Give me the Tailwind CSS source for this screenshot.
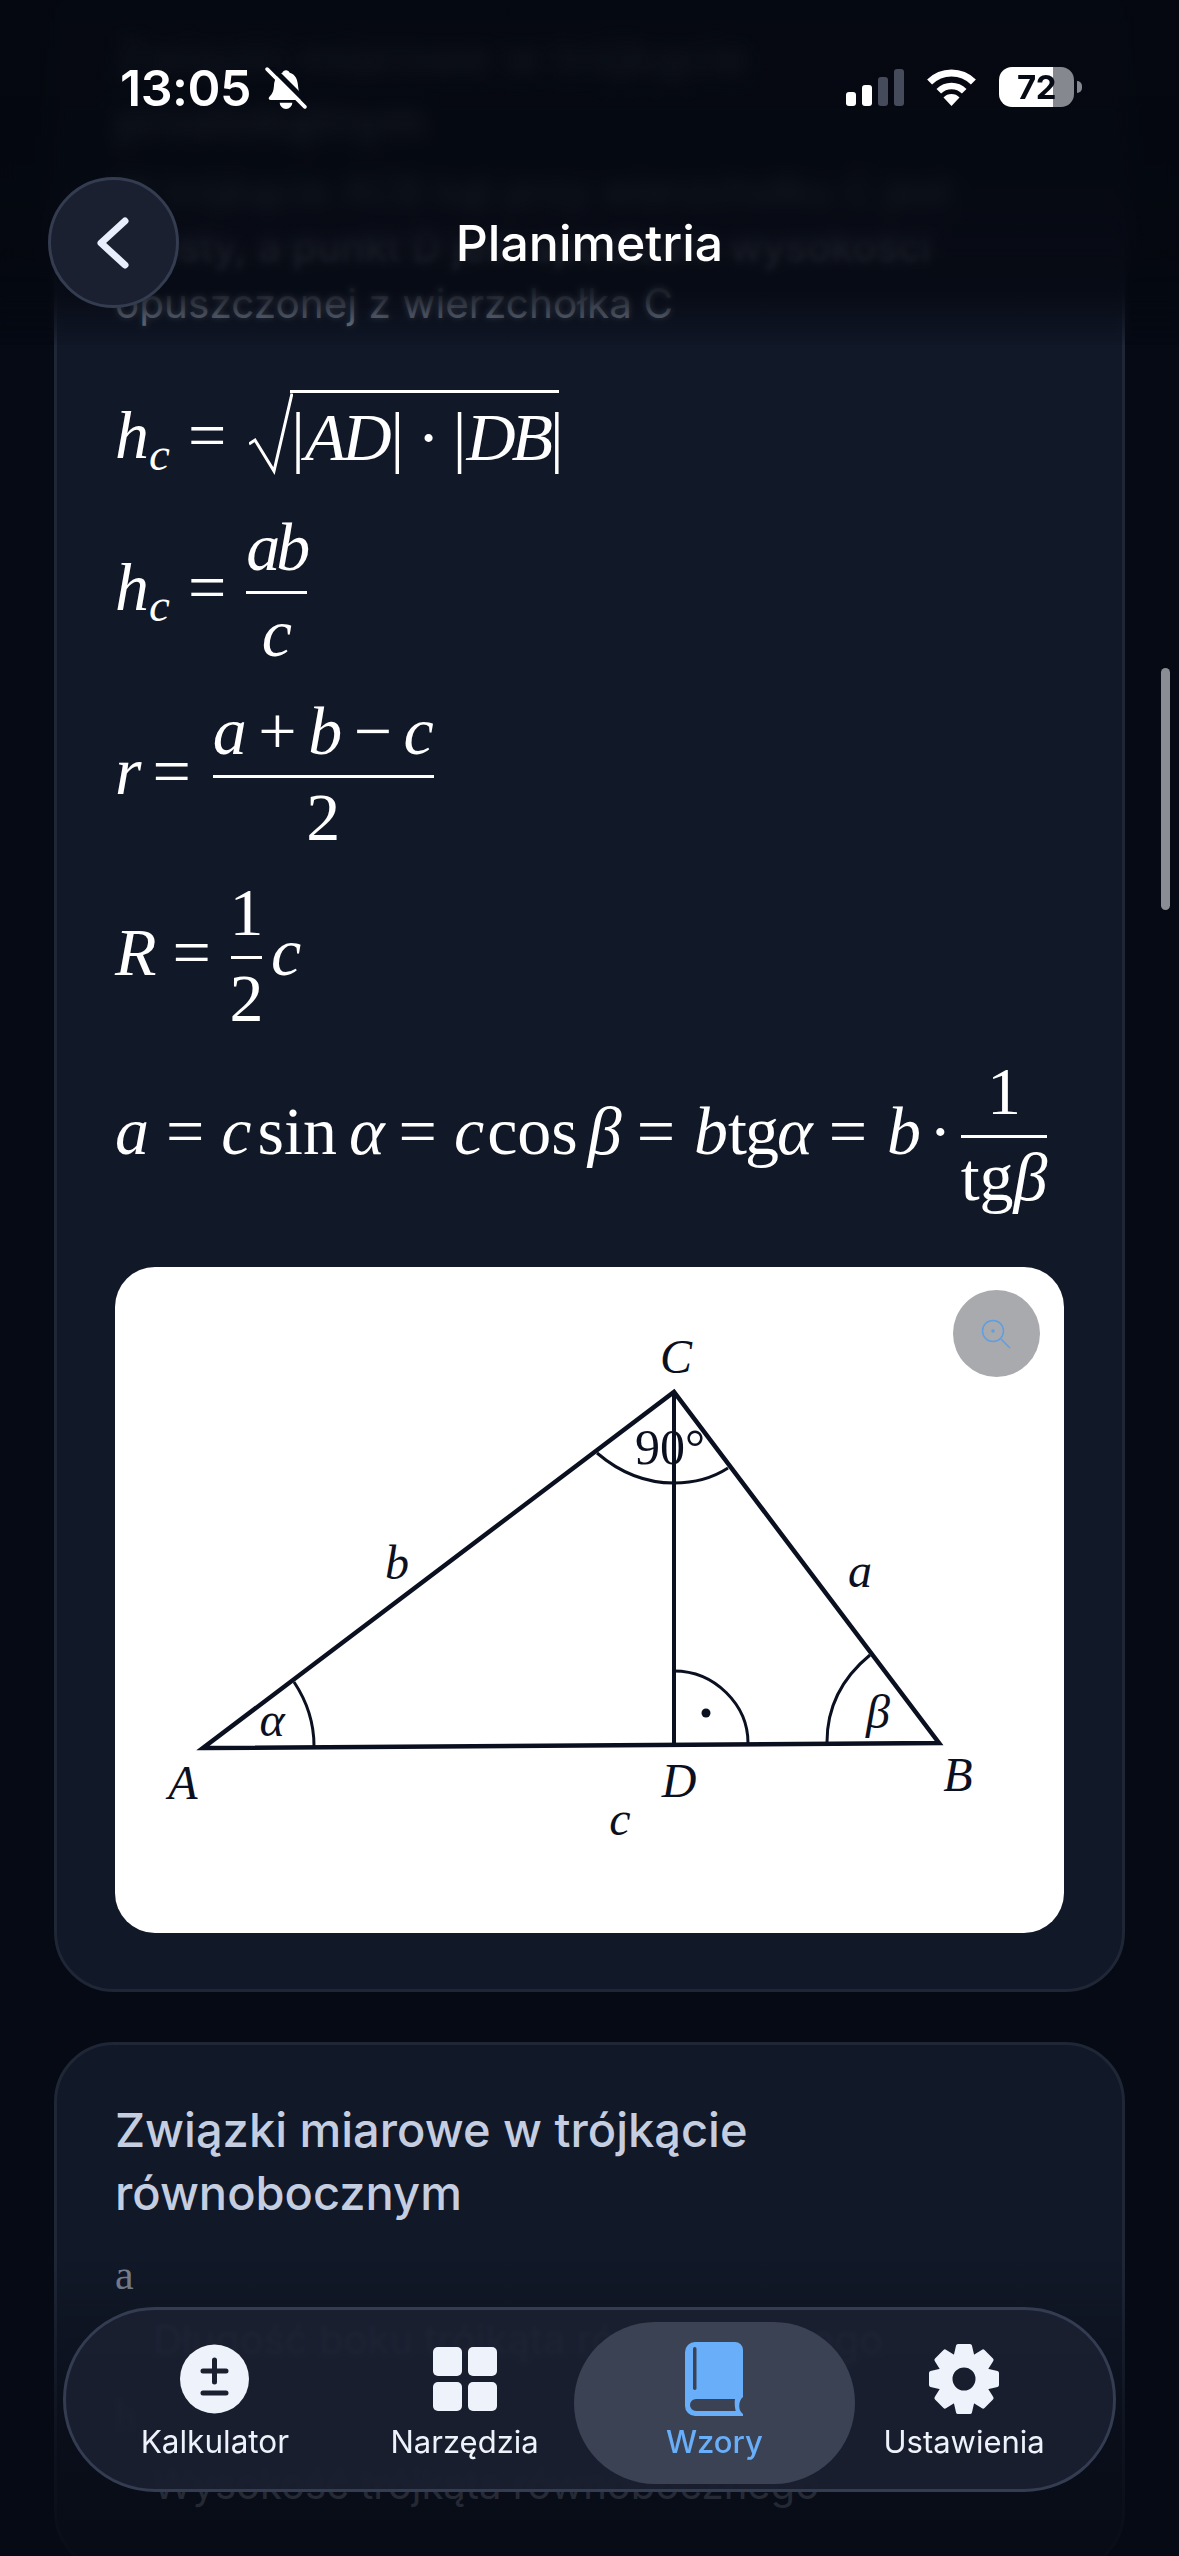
<!DOCTYPE html>
<html lang="pl">
<head>
  <meta charset="UTF-8">
  <meta name="viewport" content="width=device-width, initial-scale=1.0">
  <title>Planimetria</title>
  <script src="https://cdn.jsdelivr.net/npm/@tailwindcss/browser@4"></script>
</head>
<body class="bg-[#060a14] font-['Inter',sans-serif]">
  <div class="relative w-[1179px] h-[2556px] overflow-hidden">

    <!-- Scrolled content -->
    <main class="-mt-[31px] px-[54px] flex flex-col gap-[50px]">

      <!-- Card: right triangle -->
      <section class="bg-[#111827] border-[3px] border-[#1f2636] rounded-[60px] px-[58px] pt-[53px] pb-[56px]">
        <h2 class="text-[47px] leading-[63px] font-medium text-[#c5cde0]">Związki miarowe w trójkącie<br>prostokątnym</h2>
        <p class="mt-[10px] text-[40.500px] leading-[57px] text-[#9aa3b5]">W trójkącie ACB kąt przy wierzchołku C jest<br>prosty, a punkt D jest spodkiem wysokości<br>opuszczonej z wierzchołka C</p>

        <!-- Formulas -->
        <div class="font-['Liberation_Serif',serif] text-[68px] text-white">
          <div class="mt-[58px] h-[90px] flex items-center leading-[80px]">
            <span class="italic">h<sub class="text-[47px]">c</sub></span>
            <span class="ml-[18px]">=</span>
            <svg class="ml-[23px] w-[44px] h-[90px] shrink-0" viewBox="0 0 44 90" fill="none" stroke="#fff"><path d="M0 54 L6 50 L25 81 L43 3.500" stroke-width="3"/></svg>
            <div class="-ml-[3px] border-t-[3px] border-white h-[90px] w-[269px] flex items-center leading-[84px] font-light">
              <span class="ml-[1px]">|</span><span class="italic tracking-[-4px]">AD</span><span class="ml-[3px]">|</span><span class="mx-[13px]">·</span><span>|</span><span class="italic tracking-[-4px]">DB</span><span class="ml-[1px]">|</span>
            </div>
          </div>

          <div class="mt-[26px] h-[161px] flex items-center leading-[80px]">
            <span class="italic">h<sub class="text-[47px]">c</sub></span>
            <span class="ml-[18px] mr-[20px]">=</span>
            <div class="mt-[12px] flex flex-col items-center">
              <div class="h-[79px] leading-[70px] italic tracking-[-4px] pr-[1px]">ab</div>
              <div class="h-[3px] w-full bg-white"></div>
              <div class="h-[79px] leading-[78px] italic">c</div>
            </div>
          </div>

          <div class="mt-[23px] h-[161px] flex items-center leading-[80px]">
            <span class="italic">r</span>
            <span class="ml-[11px] mr-[22px]">=</span>
            <div class="mt-[12px] flex flex-col items-center">
              <div class="h-[79px] leading-[70px] flex">
                <span class="italic">a</span><span class="mx-[11.500px]">+</span><span class="italic">b</span><span class="mx-[11.500px]">−</span><span class="italic">c</span>
              </div>
              <div class="h-[3px] w-full bg-white"></div>
              <div class="h-[79px] leading-[78px]">2</div>
            </div>
          </div>

          <div class="mt-[20px] h-[161px] flex items-center leading-[80px]">
            <span class="italic">R</span>
            <span class="ml-[16px] mr-[20px]">=</span>
            <div class="mt-[12px] w-[31px] flex flex-col items-center">
              <div class="h-[79px] leading-[70px]">1</div>
              <div class="h-[3px] w-full bg-white"></div>
              <div class="h-[79px] leading-[78px]">2</div>
            </div>
            <span class="italic ml-[9px]">c</span>
          </div>

          <div class="mt-[18px] h-[161px] flex items-center leading-[80px]">
            <span class="italic">a</span>
            <span class="ml-[17px]">=</span>
            <span class="italic ml-[17px]">c</span>
            <span class="ml-[6px]">sin</span>
            <span class="italic ml-[12px]">α</span>
            <span class="ml-[14px]">=</span>
            <span class="italic ml-[17px]">c</span>
            <span class="ml-[3px]">cos</span>
            <span class="italic ml-[10px]">β</span>
            <span class="ml-[15px]">=</span>
            <span class="italic ml-[19px]">b</span>
            <span class="tracking-[-2px]">tg</span>
            <span class="italic">α</span>
            <span class="ml-[16px]">=</span>
            <span class="italic ml-[20px]">b</span>
            <span class="ml-[8px]">·</span>
            <div class="ml-[9px] mt-[12px] flex flex-col items-center">
              <div class="h-[79px] leading-[70px]">1</div>
              <div class="h-[3px] w-full bg-white"></div>
              <div class="h-[79px] leading-[78px] whitespace-nowrap">tg<span class="italic">β</span></div>
            </div>
          </div>
        </div>

        <!-- Triangle picture -->
        <div class="relative mt-[56px] h-[666px] bg-white rounded-[40px] overflow-hidden">
          <svg class="w-full h-full font-['Liberation_Serif',serif] italic" viewBox="115 1267 949 666" fill="none" stroke="#0b1020">
            <path d="M203 1748 L939 1743 L674 1392 Z" stroke-width="4.500" stroke-linejoin="miter"/>
            <path d="M674 1392 V1745" stroke-width="4"/>
            <path d="M294 1682 Q314 1712 314 1746" stroke-width="3"/>
            <path d="M597 1453 Q632 1483 674 1483 Q705 1483 728 1468" stroke-width="3"/>
            <path d="M674 1671 C715 1671 748 1705 748 1743" stroke-width="3"/>
            <path d="M870 1655 C842 1678 827 1708 827 1742" stroke-width="3"/>
            <circle cx="706" cy="1713" r="4.500" fill="#0b1020" stroke="none"/>
            <g fill="#0b1020" stroke="none" font-size="48" text-anchor="middle">
              <text x="676" y="1373">C</text>
              <text x="397" y="1579">b</text>
              <text x="860" y="1587">a</text>
              <text x="272" y="1736">α</text>
              <text x="878" y="1728">β</text>
              <text x="183" y="1799">A</text>
              <text x="679" y="1797">D</text>
              <text x="958" y="1791">B</text>
              <text x="620" y="1835">c</text>
              <text x="670" y="1464" font-style="normal" font-size="50">90°</text>
            </g>
          </svg>
          <button class="absolute top-[23px] right-[24px] w-[87px] h-[87px] rounded-full bg-[#a9aaae] flex items-center justify-center">
            <svg class="w-[36px] h-[36px]" viewBox="0 0 36 36" fill="none" stroke="#5f9ee0" stroke-width="1.500">
              <circle cx="14" cy="15" r="10.500"/>
              <path d="M22 23 L31 32"/>
              <circle cx="14" cy="15" r="1"/>
            </svg>
          </button>
        </div>
      </section>

      <!-- Card: equilateral triangle -->
      <section class="bg-[#111827] border-[3px] border-[#1f2636] rounded-[60px] px-[58px] pt-[53px] pb-[56px]">
        <h2 class="text-[47px] leading-[63px] font-medium text-[#c5cde0]">Związki miarowe w trójkącie<br>równobocznym</h2>
        <div class="mt-[21px] font-['Liberation_Serif',serif] text-[42px] leading-[60px] text-[#7e8696]">a</div>
        <p class="mt-[7px] pl-[38px] text-[40px] leading-[56px] text-[#9aa3b5]">Długość boku trójkąta równobocznego</p>
        <div class="mt-[18px] font-['Liberation_Serif',serif] text-[42px] leading-[60px] text-[#7e8696]">h</div>
        <p class="mt-[11px] pl-[38px] text-[40px] leading-[56px] text-[#9aa3b5]">Wysokość trójkąta równobocznego</p>
      </section>
    </main>

    <!-- Top blur and fade -->
    <div class="absolute top-0 inset-x-0 h-[345px] backdrop-blur-[3px] [mask-image:linear-gradient(to_bottom,black_80%,transparent)]"></div>
    <div class="absolute top-0 inset-x-0 h-[290px] backdrop-blur-[9px] [mask-image:linear-gradient(to_bottom,black_80%,transparent)]"></div>
    <div class="absolute top-0 inset-x-0 h-[345px] bg-[linear-gradient(to_bottom,rgba(5,8,16,0.95)_0%,rgba(5,8,16,0.9)_50%,rgba(5,8,16,0.74)_85%,rgba(5,8,16,0)_100%)]"></div>

    <!-- Bottom fade -->
    <div class="absolute bottom-0 inset-x-0 h-[300px] bg-[linear-gradient(to_bottom,rgba(6,10,20,0)_0%,rgba(6,10,20,0.7)_60%,rgba(6,10,20,0.88)_100%)]"></div>

    <!-- Status bar -->
    <header class="absolute top-0 inset-x-0">
      <div class="h-[177px] pl-[120px] pr-[97px] pt-[60px] flex justify-between items-start text-white">
        <div class="flex items-center gap-[14px]">
          <span class="text-[50px] leading-[56px] font-semibold tracking-[-0.5px]">13:05</span>
          <svg class="w-[42px] h-[43px]" viewBox="0 0 40 41" fill="#fff">
            <path d="M20 3c-1.500 0-3 .8-3.500 2.500C11 7 9 12 8.500 18c-.4 5-1.500 7.500-4.500 10.500-1 1-.5 3 1.500 3h29c2 0 2.500-2 1.500-3-3-3-4.100-5.500-4.500-10.500C31 12 29 7 23.500 5.500 23 3.800 21.500 3 20 3z"/>
            <path d="M14 34a6 6 0 0 0 12 0z"/>
            <path d="M5 -1 L41 35" stroke="#060a14" stroke-width="5"/>
            <path d="M2 2 L38 38" stroke="#fff" stroke-width="3.500" stroke-linecap="round"/>
          </svg>
        </div>
        <div class="flex items-center gap-[22px] mt-[7px]">
          <div class="flex items-end gap-[6px] h-[37px]">
            <div class="w-[10px] h-[14px] rounded-[3px] bg-white"></div>
            <div class="w-[10px] h-[21px] rounded-[3px] bg-white"></div>
            <div class="w-[10px] h-[29px] rounded-[3px] bg-[#454b5a]"></div>
            <div class="w-[10px] h-[37px] rounded-[3px] bg-[#454b5a]"></div>
          </div>
          <svg class="w-[51px] h-[38px]" viewBox="0 0 51 38" fill="none" stroke="#fff">
            <path d="M3.600 14.100 A31 31 0 0 1 47.400 14.100" stroke-width="7"/>
            <path d="M12.800 23.300 A18 18 0 0 1 38.200 23.300" stroke-width="6.500"/>
            <path d="M25.500 38 L17.500 29.500 A11 11 0 0 1 33.500 29.500 Z" fill="#fff" stroke="none"/>
          </svg>
          <div class="flex items-center gap-[3px]">
            <div class="relative w-[75px] h-[40px] rounded-[13px] overflow-hidden bg-[linear-gradient(to_right,#fff_72%,#85888f_72%)] flex items-center justify-center">
              <span class="text-[33px] leading-none font-bold text-[#060a14] tracking-[-0.5px]">72</span>
            </div>
            <div class="w-[5px] h-[12px] rounded-r-full bg-[#85888f]"></div>
          </div>
        </div>
      </div>

      <!-- Top bar -->
      <div class="relative h-[131px] flex items-center justify-center">
        <button class="absolute left-[48px] top-0 w-[131px] h-[131px] rounded-full bg-[#1a2030] border-[3px] border-[#343c50] flex items-center justify-center">
          <svg class="w-[32px] h-[52px] -ml-[2px]" viewBox="0 0 32 52" fill="none" stroke="#e8eefb" stroke-width="7" stroke-linecap="round" stroke-linejoin="round">
            <path d="M28 4 L4 26 L28 48"/>
          </svg>
        </button>
        <h1 class="text-[50px] leading-[60px] font-medium text-white">Planimetria</h1>
      </div>
    </header>

    <!-- Scroll indicator -->
    <div class="absolute left-[1161px] top-[668px] w-[9px] h-[242px] rounded-full bg-[#8a8d94]"></div>

    <!-- Tab bar -->
    <nav class="absolute left-[63px] top-[2307px] w-[1053px] h-[185px] rounded-[92px] border-[3px] border-[#333c50] bg-[#1a2030]/95 backdrop-blur-[2px] px-[24px] pt-[32px] grid grid-cols-4">
      <a class="flex flex-col items-center">
        <div class="h-[74px] flex items-center">
          <svg class="w-[69px] h-[70px]" viewBox="0 0 69 70">
            <circle cx="34.500" cy="35" r="34.500" fill="#eef3fb"/>
            <path d="M23 27 H46 M34.500 16 V38 M23 49 H46" stroke="#1a2030" stroke-width="5" stroke-linecap="round" fill="none"/>
          </svg>
        </div>
        <span class="mt-[6px] text-[31.500px] leading-[40px] text-[#eef3fb]">Kalkulator</span>
      </a>
      <a class="flex flex-col items-center">
        <div class="h-[74px] flex items-center">
          <div class="grid grid-cols-2 gap-[6px]">
            <div class="w-[29px] h-[29px] rounded-[5px] bg-[#eef3fb]"></div>
            <div class="w-[29px] h-[29px] rounded-[5px] bg-[#eef3fb]"></div>
            <div class="w-[29px] h-[29px] rounded-[5px] bg-[#eef3fb]"></div>
            <div class="w-[29px] h-[29px] rounded-[5px] bg-[#eef3fb]"></div>
          </div>
        </div>
        <span class="mt-[6px] text-[31px] leading-[40px] text-[#eef3fb]">Narzędzia</span>
      </a>
      <a class="relative flex flex-col items-center">
        <div class="absolute -top-[20px] -left-[16px] -right-[16px] h-[162px] rounded-[81px] bg-[#3a4254]"></div>
        <div class="relative h-[74px] flex items-center">
          <svg class="w-[58px] h-[74px]" viewBox="0 0 58 74">
            <path d="M10 0 H50 a8 8 0 0 1 8 8 V55 C54 58 52 68 58 72 a1 1 0 0 1 -1 2 H10 a10 10 0 0 1 -10 -10 V10 A10 10 0 0 1 10 0z" fill="#69aef8"/>
            <rect x="8" y="5" width="3.500" height="43" rx="1.700" fill="#3a4254"/>
            <path d="M11 57 H50 c-.6 3 -.3 8 .7 12 H11 a6 6 0 0 1 0 -12z" fill="#3a4254"/>
          </svg>
        </div>
        <span class="relative mt-[6px] text-[31px] leading-[40px] font-medium text-[#69aef8]">Wzory</span>
      </a>
      <a class="flex flex-col items-center">
        <div class="h-[74px] flex items-center">
          <svg class="w-[72px] h-[72px]" viewBox="0 0 72 72" fill="#eef3fb" stroke="none">
            <g stroke="#eef3fb" stroke-width="4" stroke-linejoin="round">
              <polygon points="30,3 42,3 45,16 27,16"/>
              <polygon points="30,3 42,3 45,16 27,16" transform="rotate(45 36 36)"/>
              <polygon points="30,3 42,3 45,16 27,16" transform="rotate(90 36 36)"/>
              <polygon points="30,3 42,3 45,16 27,16" transform="rotate(135 36 36)"/>
              <polygon points="30,3 42,3 45,16 27,16" transform="rotate(180 36 36)"/>
              <polygon points="30,3 42,3 45,16 27,16" transform="rotate(225 36 36)"/>
              <polygon points="30,3 42,3 45,16 27,16" transform="rotate(270 36 36)"/>
              <polygon points="30,3 42,3 45,16 27,16" transform="rotate(315 36 36)"/>
            </g>
            <circle cx="36" cy="36" r="18.500" fill="none" stroke="#eef3fb" stroke-width="14"/>
          </svg>
        </div>
        <span class="mt-[6px] text-[31px] leading-[40px] text-[#eef3fb]">Ustawienia</span>
      </a>
    </nav>
  </div>
</body>
</html>
